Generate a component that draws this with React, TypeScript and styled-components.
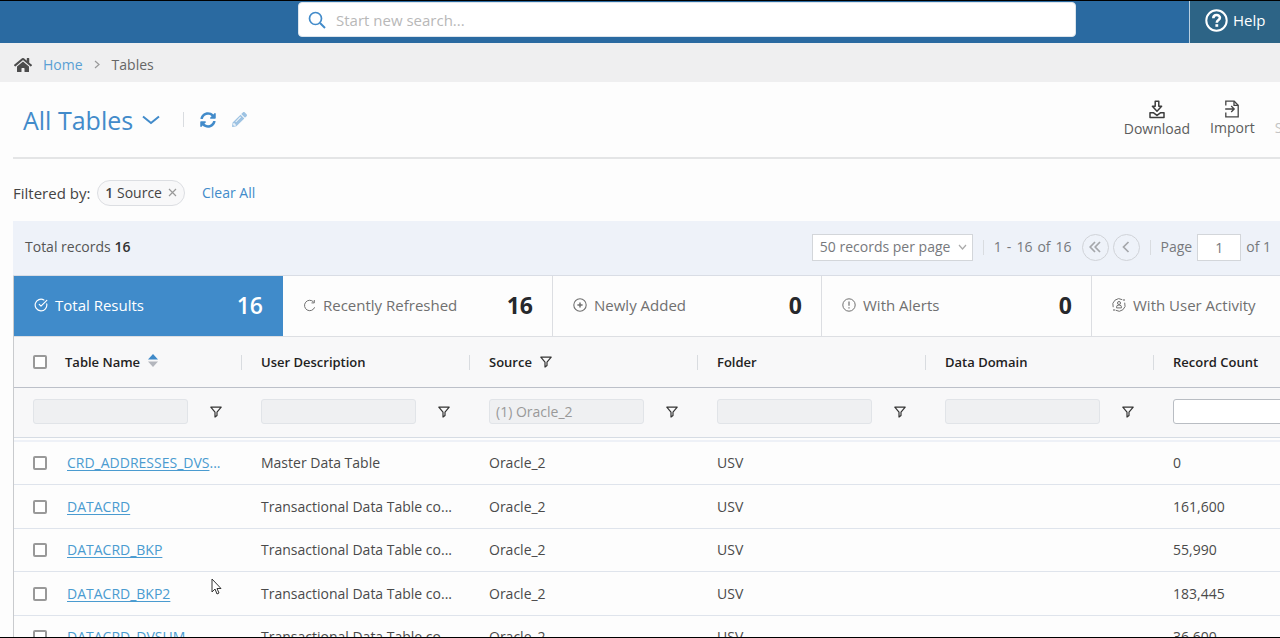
import React from 'react';
import styled, { createGlobalStyle, css } from 'styled-components';
import { FaHome, FaSyncAlt, FaPencilAlt } from 'react-icons/fa';
import { CircleCheckBig } from 'lucide-react';

const GlobalStyle = createGlobalStyle`
  *, *::before, *::after { box-sizing: border-box; }
  body {
    margin: 0;
    overflow: hidden;
    background: #fdfdfd;
    color: #4a4a4a;
    font-family: 'Open Sans', 'Noto Sans', sans-serif;
    font-size: 14px;
    line-height: 20px;
  }
  button, input, select { font: inherit; color: inherit; margin: 0; }
  button { background: none; border: 0; padding: 0; cursor: pointer; }
  a { color: #428bca; text-decoration: none; }
  svg { display: block; flex: none; }
`;

const Page = styled.div`
  display: flex;
  flex-direction: column;
  height: 100vh;
  overflow: hidden;
  border-top: 1px solid #000;
  border-bottom: 1px solid #000;
`;

const TopBar = styled.header`
  display: flex;
  flex: none;
  height: 42px;
  background: #2a6aa1;
`;

const SearchArea = styled.div`
  display: flex;
  align-items: flex-start;
  flex: 1;
  padding: 1px 113px 0 298px;
`;

const SearchBox = styled.label`
  display: flex;
  align-items: center;
  gap: 10px;
  flex: 1;
  height: 35px;
  padding: 0 9px;
  border: 1px solid #dbe4ec;
  border-radius: 4px;
  background: #fff;
  color: #428bca;
`;

const SearchInput = styled.input`
  flex: 1;
  min-width: 0;
  padding: 0;
  border: 0;
  outline: 0;
  background: transparent;
  font-size: 15px;
  &::placeholder { color: #b8b8b8; opacity: 1; }
`;

const HelpButton = styled.button`
  display: flex;
  align-items: center;
  gap: 5px;
  width: 91px;
  padding: 0 0 4px 15px;
  border-left: 1px solid #b9cfe0;
  background: #2d6486;
  font-size: 15px;
  color: #fff;
`;

const Breadcrumb = styled.nav`
  display: flex;
  align-items: center;
  gap: 11px;
  flex: none;
  height: 39px;
  padding: 4px 14px 0;
  background: #efeff0;
  color: #666;
  svg { color: #999; }
  svg:first-child { color: #4c4c4c; }
  a { color: #5a9fd4; }
`;

const Main = styled.main`
  display: flex;
  flex-direction: column;
  flex: 1;
  min-height: 0;
  padding-left: 13px;
`;

const TitleRow = styled.div`
  display: flex;
  align-items: center;
  flex: none;
  height: 77px;
  padding-left: 10px;
  border-bottom: 2px solid #e4e5e6;
`;

const Title = styled.h1`
  margin: 0;
  font-size: 25px;
  font-weight: 400;
  line-height: 32px;
  color: #428bca;
  button { display: flex; align-items: center; gap: 9px; }
`;

const Divider = styled.span`
  flex: none;
  width: 1px;
  height: 15px;
  background: #d9dce0;
`;

const TitleTools = styled.div`
  display: flex;
  align-items: center;
  gap: 16px;
  margin-left: 23px;
  color: #428bca;
`;

const IconButton = styled.button<{ $faded?: boolean }>`
  opacity: ${p => (p.$faded ? 0.5 : 1)};
`;

const Actions = styled.div`
  display: flex;
  gap: 20px;
  flex: none;
  margin: 0 -25px 0 auto;
`;

const ActionButton = styled.button`
  display: flex;
  flex-direction: column;
  align-items: center;
  color: #5c5c5c;
  &:disabled { color: #c4c4c4; }
`;

const FilterBar = styled.div`
  display: flex;
  align-items: center;
  flex: none;
  height: 62px;
  padding-top: 5px;
  color: #444;
  a { margin-left: 17px; }
`;

const FilterTitle = styled.span`
  font-size: 15px;
`;

const Chip = styled.span`
  display: flex;
  align-items: center;
  gap: 6px;
  height: 26px;
  margin-left: 7px;
  padding: 0 7px;
  border: 1px solid #dcdee2;
  border-radius: 13px;
  background: #f8f8f9;
  b { font-weight: 600; }
  button { color: #999; }
`;

const Toolbar = styled.div`
  display: flex;
  align-items: center;
  flex: none;
  height: 55px;
  padding: 0 9px 2px 12px;
  border-bottom: 1px solid #d9dde5;
  background: #eef2f9;
`;

const Total = styled.p`
  margin: 0 auto 0 0;
  color: #555;
  b { font-weight: 600; color: #333; }
`;

const Pager = styled.div`
  display: flex;
  align-items: center;
  gap: 10px;
  color: #77797d;
`;

const SelectWrap = styled.span`
  display: grid;
  align-items: center;
  svg {
    grid-area: 1 / 1;
    justify-self: end;
    margin-right: 6px;
    pointer-events: none;
    color: #aaa;
  }
`;

const PageSize = styled.select`
  grid-area: 1 / 1;
  appearance: none;
  width: 161px;
  height: 27px;
  padding: 0 7px;
  border: 1px solid #d3d6da;
  border-radius: 0;
  background: #fff;
`;

const Range = styled.span`
  display: flex;
  gap: 5px;
`;

const PagerButtons = styled.span`
  display: flex;
  gap: 4px;
`;

const RoundButton = styled.button`
  display: grid;
  place-items: center;
  width: 27px;
  height: 27px;
  border: 1px solid #d0d3d8;
  border-radius: 50%;
  color: #a5a7ab;
`;

const PageLabel = styled.label`
  display: flex;
  align-items: center;
  gap: 5px;
`;

const PageInput = styled.input`
  width: 44px;
  height: 27px;
  border: 1px solid #d3d6da;
  background: #fff;
  text-align: center;
`;

const Grid = styled.section`
  display: flex;
  flex-direction: column;
  flex: 1;
  min-height: 0;
  overflow: hidden;
  border-left: 1px solid #c9cbce;
`;

const Tabs = styled.div`
  display: grid;
  grid-template-columns: 269px 270px 269px 270px 269px;
  flex: none;
  height: 61px;
  border-bottom: 1px solid #dddfe3;
`;

const Tab = styled.button<{ $active?: boolean }>`
  display: flex;
  align-items: center;
  gap: 7px;
  padding: 0 19px 2px 20px;
  border-right: 1px solid #dcdee2;
  font-size: 15px;
  color: #707070;
  ${p =>
    p.$active &&
    css`
      background: #408bca;
      border-right-color: #408bca;
      color: #fff;
    `}
`;

const Count = styled.b<{ $active?: boolean }>`
  margin-left: auto;
  font-size: 23px;
  font-weight: ${p => (p.$active ? 600 : 700)};
  color: ${p => (p.$active ? '#fff' : '#26282c')};
`;

const Table = styled.table`
  width: 1368px;
  table-layout: fixed;
  border-collapse: separate;
  border-spacing: 0;
  flex: none;
`;

const HeadRow = styled.tr`
  height: 51px;
  background: #f8f8f9;
`;

const Cell = css`
  padding: 0 0 0 19px;
  text-align: left;
  white-space: nowrap;
`;

const HeadCell = styled.th`
  ${Cell}
  border-bottom: 1px solid #bcc0c9;
  font-size: 13px;
  font-weight: 600;
  color: #222;
`;

const HeadContent = styled.div`
  display: flex;
  align-items: center;
  justify-content: space-between;
`;

const HeadLabel = styled.span`
  display: flex;
  align-items: center;
  gap: 8px;
  input + span { margin-left: 10px; }
`;

const FilterCell = styled.td`
  ${Cell}
  height: 50px;
  padding-bottom: 2px;
  border-bottom: 1px solid #d6dce4;
  background: #f8f8f9;
`;

const FilterGroup = styled.div`
  display: flex;
  align-items: center;
  gap: 22px;
`;

const FilterInput = styled.input`
  width: 155px;
  height: 25px;
  padding: 0 6px;
  border: 1px solid #b9bdc3;
  border-radius: 3px;
  background: #fff;
  &:disabled {
    border-color: #e1e4e8;
    background: #eff0f2;
    color: #999;
  }
`;

const SpacerCell = styled.td`
  height: 4px;
  padding: 0;
  border-bottom: 2px solid #eef1f7;
`;

const Row = styled.tr`
  height: 43px;
  &:nth-child(even) { height: 44px; }
`;

const BodyCell = styled.td`
  ${Cell}
  border-bottom: 1px solid #dfe4ec;
`;

const NameContent = styled.div`
  display: flex;
  align-items: center;
  gap: 20px;
`;

const NameLink = styled.span`
  color: #4a9bd0;
  a { color: inherit; text-decoration: underline; text-underline-offset: 2px; }
`;

const CheckBox = styled.input`
  flex: none;
  appearance: none;
  width: 14px;
  height: 14px;
  border: 2px solid #999;
  border-radius: 2px;
  background: #fff;
`;

const Pointer = styled.svg`
  position: absolute;
  left: 211px;
  top: 578px;
`;

const Funnel = () => (
  <svg width="12" height="12" viewBox="0 0 12 12" fill="none" stroke="#333" strokeWidth="1.2" strokeLinejoin="round">
    <path d="M.8 1.2h10.400L7 6.200v3.300L5 11V6.200z" />
  </svg>
);

const Chevron = ({ w, h, d, sw = 1.2 }: { w: number; h: number; d: string; sw?: number }) => (
  <svg width={w} height={h} viewBox={`0 0 ${w} ${h}`} fill="none" stroke="currentColor" strokeWidth={sw}>
    <path d={d} />
  </svg>
);

const SortIcon = () => (
  <svg width="10" height="18" viewBox="0 0 10 18">
    <path d="M5 1 10 6.500H0z" fill="#3f8ac9" />
    <path d="M5 14 10 8.500H0z" fill="#b3b6bd" />
  </svg>
);

const tabIcons = {
  check: <CircleCheckBig size={14} strokeWidth={2} />,
  reload: (
    <svg width="13" height="13" viewBox="0 0 13 13" fill="none" stroke="currentColor" strokeWidth="1">
      <path d="M11.6 8.3A5.2 5.2 0 1 1 10.6 3" />
      <path d="M11.3 1v2.9H8.5" />
    </svg>
  ),
  plus: (
    <svg width="14" height="14" viewBox="0 0 14 14" fill="none" stroke="currentColor" strokeWidth="1.1">
      <circle cx="7" cy="7" r="6.2" />
      <path d="M7 4.4v5.2M4.4 7h5.2" strokeWidth="1.5" />
    </svg>
  ),
  alert: (
    <svg width="14" height="14" viewBox="0 0 14 14" fill="none" stroke="currentColor">
      <circle cx="7" cy="7" r="6.2" />
      <path d="M7 3.6v4.2M7 9.2v1.2" strokeWidth="1.2" />
    </svg>
  ),
  user: (
    <svg width="14" height="14" viewBox="0 0 14 14" fill="none" stroke="currentColor">
      <path d="M1.2 9.2A6.2 6.2 0 0 1 10.3 1.7M12.7 4.7A6.2 6.2 0 0 1 3.6 12.2" />
      <path d="M12 1.2v1.6M2 11.2v1.6" strokeWidth="1.5" />
      <circle cx="7" cy="5" r="1.5" />
      <path d="M4.6 9.9V8.8a1.6 1.6 0 0 1 1.6-1.6h1.6a1.6 1.6 0 0 1 1.6 1.6v1.1z" />
    </svg>
  ),
};

const tabs: { icon: keyof typeof tabIcons; label: string; count: number }[] = [
  { icon: 'check', label: 'Total Results', count: 16 },
  { icon: 'reload', label: 'Recently Refreshed', count: 16 },
  { icon: 'plus', label: 'Newly Added', count: 0 },
  { icon: 'alert', label: 'With Alerts', count: 0 },
  { icon: 'user', label: 'With User Activity', count: 0 },
];

const columns = ['Table Name', 'User Description', 'Source', 'Folder', 'Data Domain', 'Record Count'];

const transactional = 'Transactional Data Table co...';
const rows: { name: string; clipped?: boolean; description: string; count: string }[] = [
  { name: 'CRD_ADDRESSES_DVS', clipped: true, description: 'Master Data Table', count: '0' },
  { name: 'DATACRD', description: transactional, count: '161,600' },
  { name: 'DATACRD_BKP', description: transactional, count: '55,990' },
  { name: 'DATACRD_BKP2', description: transactional, count: '183,445' },
  { name: 'DATACRD_DVSUM', description: transactional, count: '36,600' },
];

export default function App() {
  return (
    <Page>
      <GlobalStyle />
      <TopBar>
        <SearchArea>
          <SearchBox>
            <svg width="18" height="18" viewBox="0 0 18 18" fill="none" stroke="currentColor" strokeWidth="1.7">
              <circle cx="7.5" cy="7.5" r="6" />
              <path d="m12 12 5 5" strokeWidth="2" />
            </svg>
            <SearchInput type="search" aria-label="Search" placeholder="Start new search..." />
          </SearchBox>
        </SearchArea>
        <HelpButton type="button">
          <svg width="23" height="23" viewBox="0 0 23 23" fill="none" stroke="currentColor">
            <circle cx="11.5" cy="11.5" r="10.2" strokeWidth="2" />
            <path d="M8.3 9.2c0-4.2 6.6-4.2 6.6-.4 0 2.3-3.1 2.2-3.1 4.9" strokeWidth="2.6" />
            <path d="M11.8 15.2v2.6" strokeWidth="2.8" />
          </svg>
          Help
        </HelpButton>
      </TopBar>

      <Breadcrumb aria-label="Breadcrumb">
        <FaHome size={18} />
        <a href="#home">Home</a>
        <Chevron w={7} h={9} d="m1 1 4 3.5L1 8" />
        <span>Tables</span>
      </Breadcrumb>

      <Main>
        <TitleRow>
          <Title>
            <button type="button">
              All Tables
              <Chevron w={18} h={10} d="M1 1.5 9 8l8-6.5" sw={2} />
            </button>
          </Title>
          <TitleTools>
            <Divider />
            <IconButton type="button" aria-label="Refresh">
              <FaSyncAlt size={16} />
            </IconButton>
            <IconButton type="button" aria-label="Edit" $faded>
              <FaPencilAlt size={15} />
            </IconButton>
          </TitleTools>
          <Actions>
            <ActionButton type="button">
              <svg width="16" height="19" viewBox="0 0 16 19" fill="none" stroke="#3c3c3c" strokeWidth="1.5" strokeLinejoin="round">
                <path d="M6.2 1.2h3.6v5h2.8L8 11.2 3.4 6.2h2.8z" />
                <path d="M4.6 12.8H1v4.8h14v-4.8h-3.6L8 15.4z" />
              </svg>
              Download
            </ActionButton>
            <ActionButton type="button">
              <svg width="16" height="18" viewBox="0 0 16 18" fill="none" stroke="#444" strokeWidth="1.3">
                <path d="M1.8 5.5V1.2h8.4l4 4v11.6H1.8v-4.2" />
                <path d="M10 1.2v4.2h4.2M1.2 9h8.6M7.2 6l3 3-3 3" />
              </svg>
              Import
            </ActionButton>
            <ActionButton type="button" disabled>
              <svg width="10" height="18" viewBox="0 0 10 18" fill="none" stroke="currentColor">
                <path d="M1 2h8v14H1z" />
              </svg>
              Save
            </ActionButton>
          </Actions>
        </TitleRow>

        <FilterBar>
          <FilterTitle>Filtered by:</FilterTitle>
          <Chip>
            <span>
              <b>1</b> Source
            </span>
            <button type="button" aria-label="Remove filter">
              <Chevron w={9} h={9} d="m1 1 7 7M8 1 1 8" />
            </button>
          </Chip>
          <a href="#clear">Clear All</a>
        </FilterBar>

        <Toolbar>
          <Total>
            Total records <b>16</b>
          </Total>
          <Pager>
            <SelectWrap>
              <PageSize aria-label="Records per page" defaultValue="50">
                <option value="50">50 records per page</option>
                <option value="100">100 records per page</option>
              </PageSize>
              <Chevron w={9} h={7} d="m1 1 3.5 4L8 1" />
            </SelectWrap>
            <Divider />
            <Range>
              <span>1</span>
              <span>-</span>
              <span>16</span>
              <span>of</span>
              <span>16</span>
            </Range>
            <PagerButtons>
              <RoundButton type="button" aria-label="First page">
                <Chevron w={12} h={12} d="M6 1 1.2 6 6 11M11 1 6.2 6 11 11" sw={1.7} />
              </RoundButton>
              <RoundButton type="button" aria-label="Previous page">
                <Chevron w={8} h={12} d="M6.5 1 1.5 6l5 5" sw={1.7} />
              </RoundButton>
            </PagerButtons>
            <Divider />
            <PageLabel>
              Page
              <PageInput defaultValue="1" />
              of 1
            </PageLabel>
          </Pager>
        </Toolbar>

        <Grid>
          <Tabs>
            {tabs.map((tab, i) => (
              <Tab key={tab.label} type="button" $active={i === 0}>
                {tabIcons[tab.icon]}
                {tab.label}
                {i < 4 && <Count $active={i === 0}>{tab.count}</Count>}
              </Tab>
            ))}
          </Tabs>
          <Table>
            <thead>
              <HeadRow>
                {columns.map((name, i) => (
                  <HeadCell key={name} scope="col">
                    <HeadContent>
                      <HeadLabel>
                        {i === 0 && <CheckBox type="checkbox" aria-label="Select all tables" />}
                        <span>{name}</span>
                        {i === 0 && <SortIcon />}
                        {i === 2 && <Funnel />}
                      </HeadLabel>
                      <Divider />
                    </HeadContent>
                  </HeadCell>
                ))}
              </HeadRow>
              <tr>
                {columns.map((name, i) => (
                  <FilterCell key={name}>
                    <FilterGroup>
                      <FilterInput
                        aria-label={`Filter by ${name}`}
                        disabled={i < 5}
                        defaultValue={i === 2 ? '(1) Oracle_2' : ''}
                      />
                      {i < 5 && <Funnel />}
                    </FilterGroup>
                  </FilterCell>
                ))}
              </tr>
              <tr>
                <SpacerCell colSpan={6} />
              </tr>
            </thead>
            <tbody>
              {rows.map(row => (
                <Row key={row.name}>
                  <BodyCell>
                    <NameContent>
                      <CheckBox type="checkbox" aria-label={`Select ${row.name}`} />
                      <NameLink>
                        <a href={`#${row.name}`}>{row.name}</a>
                        {row.clipped && '...'}
                      </NameLink>
                    </NameContent>
                  </BodyCell>
                  <BodyCell>{row.description}</BodyCell>
                  <BodyCell>Oracle_2</BodyCell>
                  <BodyCell>USV</BodyCell>
                  <BodyCell />
                  <BodyCell>{row.count}</BodyCell>
                </Row>
              ))}
            </tbody>
          </Table>
        </Grid>
      </Main>

      <Pointer width="12" height="18" viewBox="0 0 12 18" fill="#fff" stroke="#333">
        <path d="M1 1v13l3-3 2 5 2-1-2-4.500h4z" />
      </Pointer>
    </Page>
  );
}
